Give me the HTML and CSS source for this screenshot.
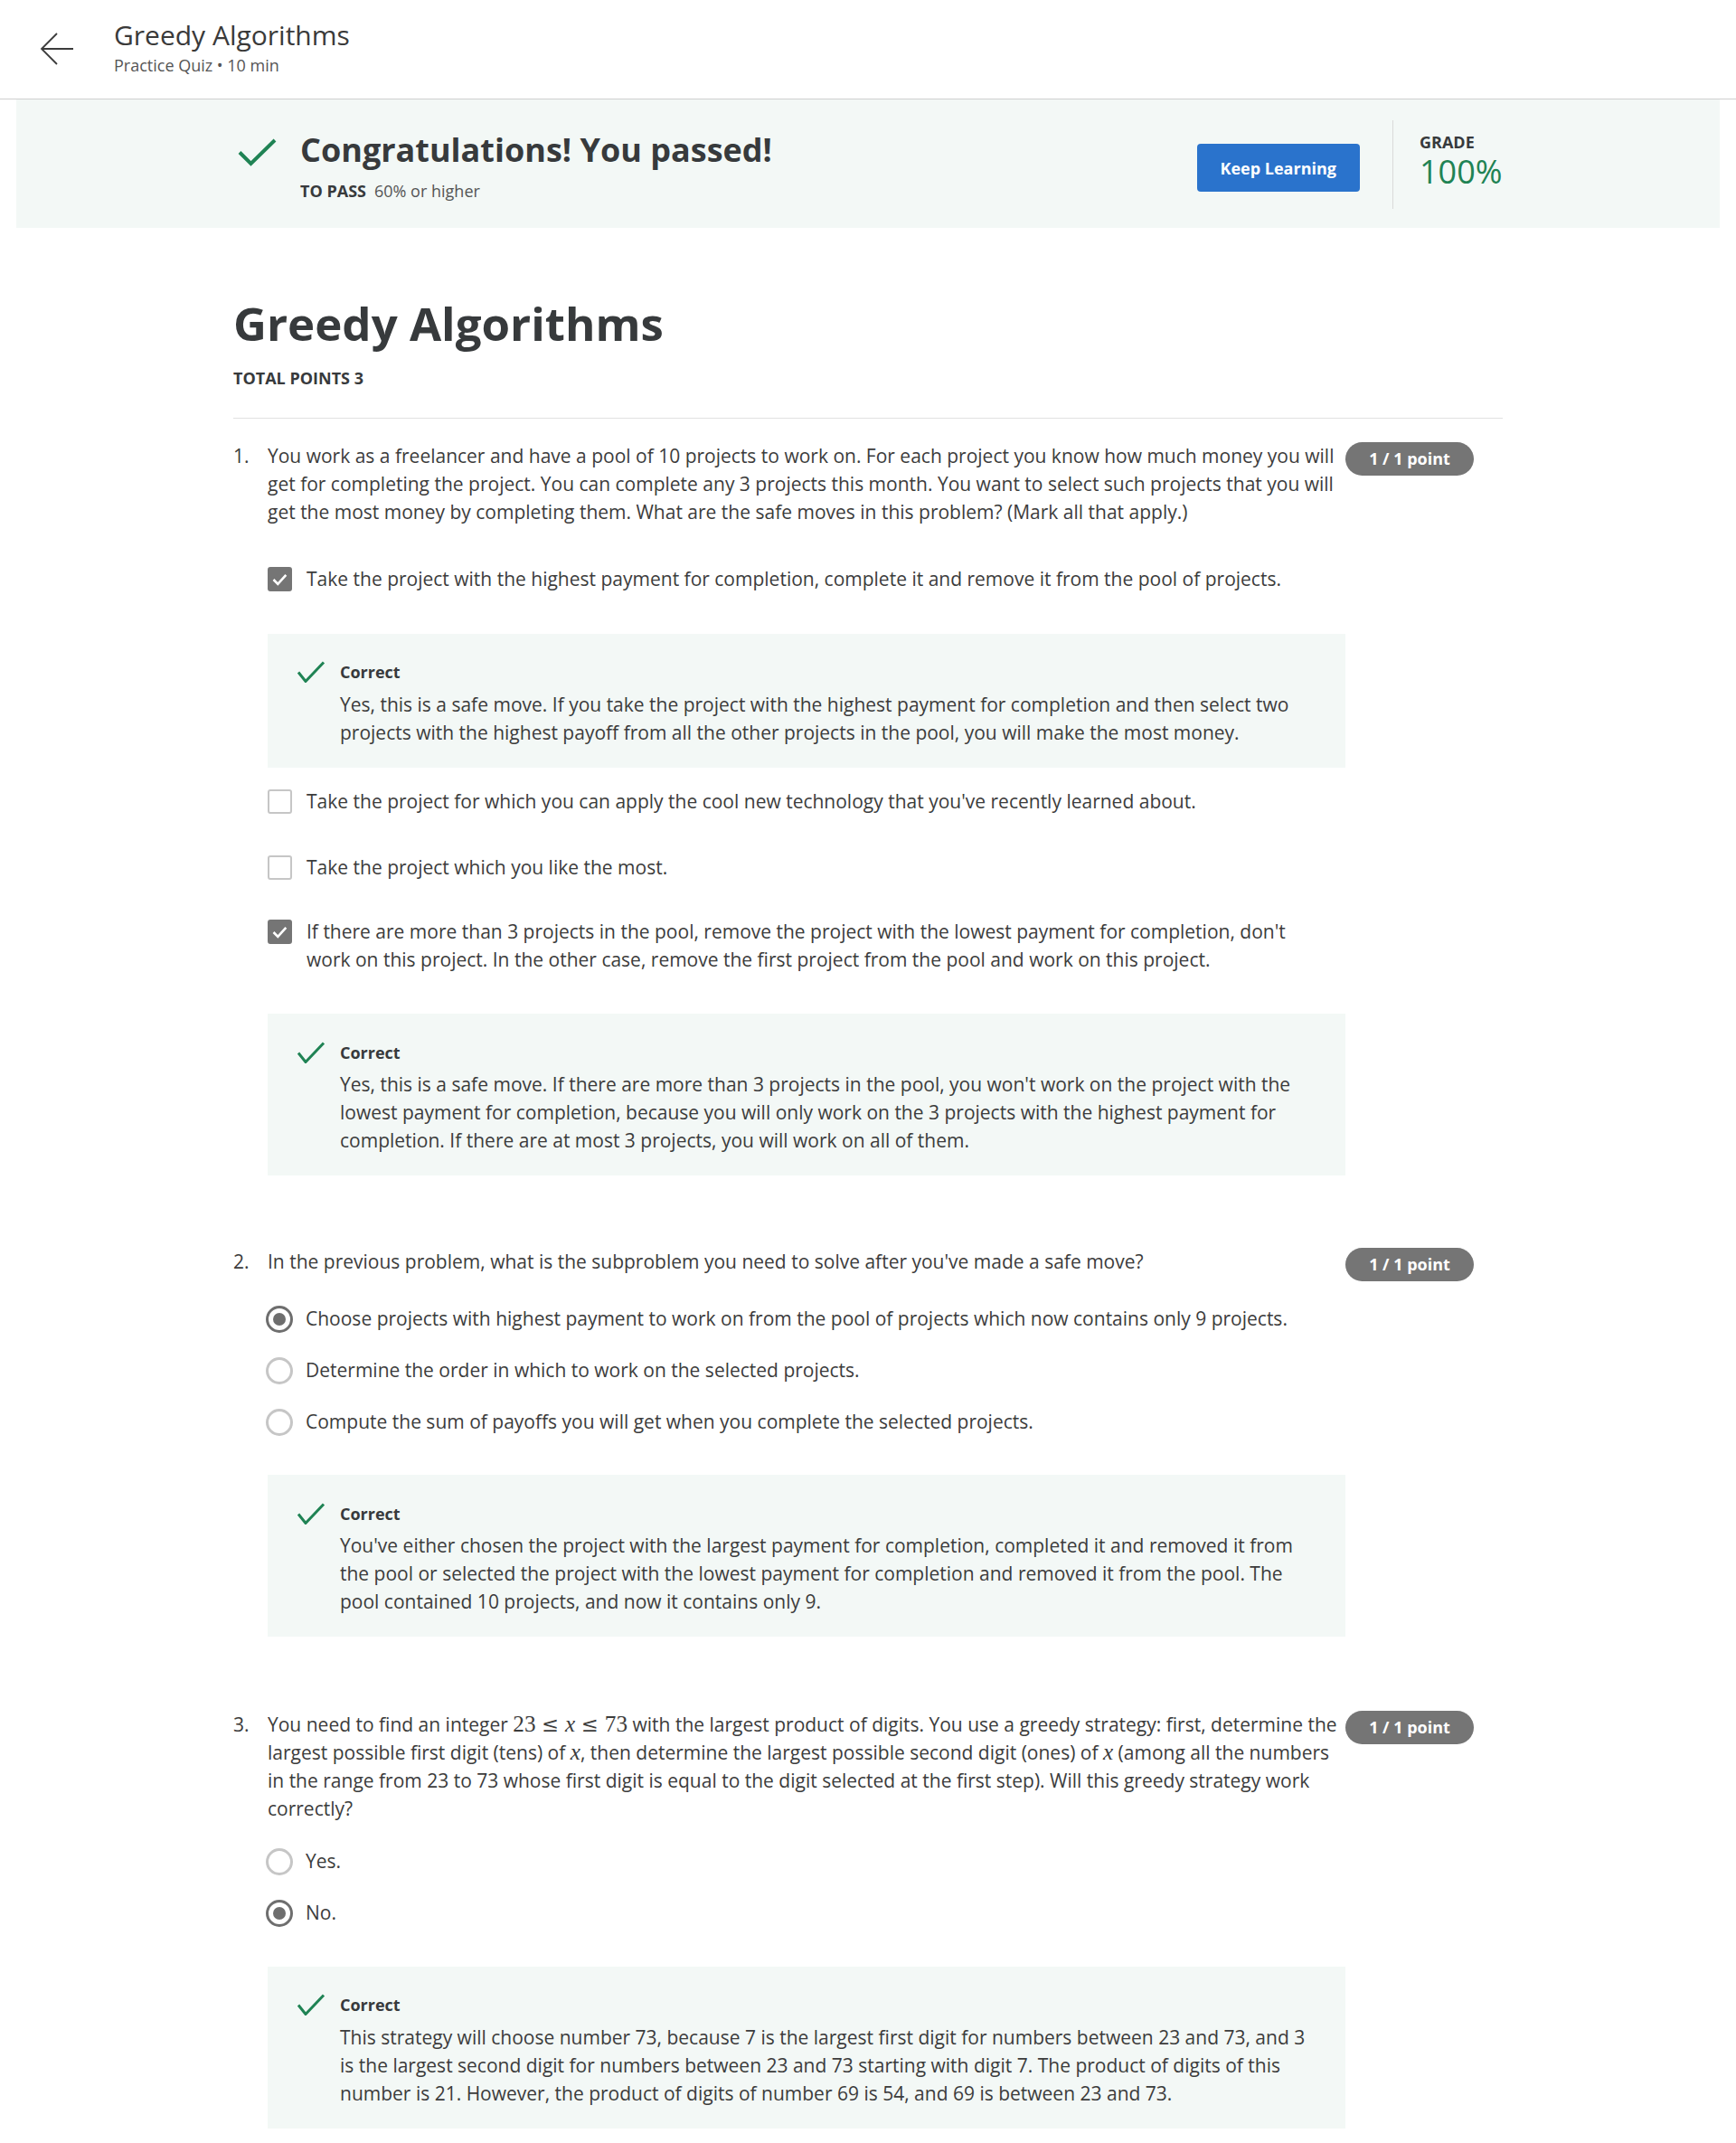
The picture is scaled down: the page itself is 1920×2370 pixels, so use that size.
FILE: index.html
```html
<!DOCTYPE html>
<html lang="en">
<head>
<meta charset="utf-8">
<title>Greedy Algorithms | Practice Quiz</title>
<link rel="stylesheet" href="styles.css">
</head>
<body>
<header class="topbar">
  <a class="back" aria-label="Back">
    <svg viewBox="0 0 38 36" width="38" height="36"><path d="M37 18H2M19 1L2 18l17 17" fill="none" stroke="#3c3c3c" stroke-width="1.8"/></svg>
  </a>
  <div class="item-head">
    <div class="item-title">Greedy Algorithms</div>
    <div class="item-sub">Practice Quiz • 10 min</div>
  </div>
</header>

<section class="banner">
  <div class="banner-inner">
    <div class="pass">
      <svg class="pass-check" viewBox="0 0 43 31" width="43" height="31"><path d="M2 15.5l12.5 12.5L41 2" fill="none" stroke="#1f8354" stroke-width="4"/></svg>
      <div class="pass-text">
        <div class="pass-title">Congratulations! You passed!</div>
        <div class="pass-req"><b>TO PASS</b>60% or higher</div>
      </div>
    </div>
    <div class="result">
      <button class="keep">Keep Learning</button>
      <div class="vdiv"></div>
      <div class="grade">
        <div class="grade-label">GRADE</div>
        <div class="grade-value">100%</div>
      </div>
    </div>
  </div>
</section>

<main class="quiz">
  <h1>Greedy Algorithms</h1>
  <div class="total">TOTAL POINTS 3</div>
  <hr class="rule">

  <div class="question">
    <div class="qnum">1.</div>
    <div class="qbody">
      <div class="qtext">You work as a freelancer and have a pool of 10 projects to work on. For each project you know how much money you will get for completing the project. You can complete any 3 projects this month. You want to select such projects that you will get the most money by completing them. What are the safe moves in this problem? (Mark all that apply.)</div>
      <div class="options checks">
        <div class="opt"><span class="box checked"><svg viewBox="0 0 23 23" width="23" height="23"><path d="M4.5 12l4.8 4.8 9-10" fill="none" stroke="#fff" stroke-width="2.6"/></svg></span><span class="opt-text">Take the project with the highest payment for completion, complete it and remove it from the pool of projects.</span></div>
        <div class="feedback">
          <svg class="fb-icon" viewBox="0 0 32 24" width="32" height="24"><path d="M2 12.5l8 10L30 1.5" fill="none" stroke="#1f8354" stroke-width="3"/></svg>
          <div class="fb-body">
            <div class="fb-label">Correct</div>
            <div class="fb-text">Yes, this is a safe move. If you take the project with the highest payment for completion and then select two projects with the highest payoff from all the other projects in the pool, you will make the most money.</div>
          </div>
        </div>
        <div class="opt"><span class="box"></span><span class="opt-text">Take the project for which you can apply the cool new technology that you've recently learned about.</span></div>
        <div class="opt"><span class="box"></span><span class="opt-text">Take the project which you like the most.</span></div>
        <div class="opt"><span class="box checked"><svg viewBox="0 0 23 23" width="23" height="23"><path d="M4.5 12l4.8 4.8 9-10" fill="none" stroke="#fff" stroke-width="2.6"/></svg></span><span class="opt-text">If there are more than 3 projects in the pool, remove the project with the lowest payment for completion, don't work on this project. In the other case, remove the first project from the pool and work on this project.</span></div>
        <div class="feedback">
          <svg class="fb-icon" viewBox="0 0 32 24" width="32" height="24"><path d="M2 12.5l8 10L30 1.5" fill="none" stroke="#1f8354" stroke-width="3"/></svg>
          <div class="fb-body">
            <div class="fb-label">Correct</div>
            <div class="fb-text">Yes, this is a safe move. If there are more than 3 projects in the pool, you won't work on the project with the lowest payment for completion, because you will only work on the 3 projects with the highest payment for completion. If there are at most 3 projects, you will work on all of them.</div>
          </div>
        </div>
      </div>
    </div>
    <div class="qscore"><span class="badge">1 / 1 point</span></div>
  </div>

  <div class="question">
    <div class="qnum">2.</div>
    <div class="qbody">
      <div class="qtext">In the previous problem, what is the subproblem you need to solve after you've made a safe move?</div>
      <div class="options radios">
        <div class="opt"><span class="radio on"></span><span class="opt-text">Choose projects with highest payment to work on from the pool of projects which now contains only 9 projects.</span></div>
        <div class="opt"><span class="radio"></span><span class="opt-text">Determine the order in which to work on the selected projects.</span></div>
        <div class="opt"><span class="radio"></span><span class="opt-text">Compute the sum of payoffs you will get when you complete the selected projects.</span></div>
        <div class="feedback">
          <svg class="fb-icon" viewBox="0 0 32 24" width="32" height="24"><path d="M2 12.5l8 10L30 1.5" fill="none" stroke="#1f8354" stroke-width="3"/></svg>
          <div class="fb-body">
            <div class="fb-label">Correct</div>
            <div class="fb-text">You've either chosen the project with the largest payment for completion, completed it and removed it from the pool or selected the project with the lowest payment for completion and removed it from the pool. The pool contained 10 projects, and now it contains only 9.</div>
          </div>
        </div>
      </div>
    </div>
    <div class="qscore"><span class="badge">1 / 1 point</span></div>
  </div>

  <div class="question">
    <div class="qnum">3.</div>
    <div class="qbody">
      <div class="qtext">You need to find an integer <span class="math">23<span class="rel">≤</span><i>x</i><span class="rel">≤</span>73</span> with the largest product of digits. You use a greedy strategy: first, determine the largest possible first digit (tens) of <span class="math"><i>x</i></span>, then determine the largest possible second digit (ones) of <span class="math"><i>x</i></span> (among all the numbers in the range from 23 to 73 whose first digit is equal to the digit selected at the first step). Will this greedy strategy work correctly?</div>
      <div class="options radios tight">
        <div class="opt"><span class="radio"></span><span class="opt-text">Yes.</span></div>
        <div class="opt"><span class="radio on"></span><span class="opt-text">No.</span></div>
        <div class="feedback">
          <svg class="fb-icon" viewBox="0 0 32 24" width="32" height="24"><path d="M2 12.5l8 10L30 1.5" fill="none" stroke="#1f8354" stroke-width="3"/></svg>
          <div class="fb-body">
            <div class="fb-label">Correct</div>
            <div class="fb-text">This strategy will choose number 73, because 7 is the largest first digit for numbers between 23 and 73, and 3 is the largest second digit for numbers between 23 and 73 starting with digit 7. The product of digits of this number is 21. However, the product of digits of number 69 is 54, and 69 is between 23 and 73.</div>
          </div>
        </div>
      </div>
    </div>
    <div class="qscore"><span class="badge">1 / 1 point</span></div>
  </div>
</main>
</body>
</html>
```

FILE: styles.css
```css
* { box-sizing: border-box; }

body {
  margin: 0;
  font-family: "Open Sans", "Liberation Sans", sans-serif;
  color: #373a3c;
  background: #fff;
}

/* top bar */
.topbar {
  height: 110px;
  border-bottom: 1px solid #cfcfcf;
  display: flex;
  align-items: flex-start;
}
.back { display: block; margin: 36px 0 0 44px; width: 38px; height: 36px; }
.back svg { display: block; }
.item-head { margin: 21px 0 0 44px; }
.item-title { font-size: 30px; line-height: 36px; color: #3a3a3a; }
.item-sub { font-size: 18px; line-height: 24px; margin-top: 3px; color: #555; }

/* pass banner */
.banner {
  margin: 0 18px;
  height: 142px;
  background: #f3f8f6;
}
.banner-inner {
  width: 1404px;
  height: 100%;
  margin: 0 auto;
  display: flex;
  justify-content: space-between;
  align-items: flex-start;
}
.pass { display: flex; align-items: flex-start; }
.pass-check { display: block; margin: 43px 0 0 5px; }
.pass-text { margin: 34px 0 0 26px; }
.pass-title { font-size: 36px; line-height: 44px; font-weight: 700; color: #373a3c; }
.pass-req { font-size: 18px; line-height: 27px; margin-top: 9.5px; color: #555; }
.pass-req b { color: #373a3c; margin-right: 9px; }

.result { display: flex; align-items: flex-start; }
.keep {
  margin-top: 49px;
  height: 53px;
  padding: 0 26px;
  background: #2a73cc;
  color: #fff;
  border: 0;
  border-radius: 4px;
  font-family: "Open Sans", sans-serif;
  font-size: 18px;
  font-weight: 700;
}
.vdiv { margin: 23px 29px 0 36px; width: 1px; height: 98px; background: #dadada; }
.grade { margin-top: 33.5px; width: 92px; }
.grade-label { font-size: 18px; line-height: 27px; font-weight: 700; color: #373a3c; }
.grade-value { font-size: 36px; line-height: 44px; margin-top: -3px; color: #1f8354; }

/* quiz */
.quiz { width: 1404px; margin: 0 auto; padding: 75px 0 40px; }
.quiz h1 { margin: 0; font-size: 51px; line-height: 61px; font-weight: 700; color: #373a3c; }
.total { margin-top: 16.5px; font-size: 18px; line-height: 27px; font-weight: 700; }
.rule { margin: 30px 0 0; border: 0; border-top: 1px solid #e1e1e1; height: 0; }

.question {
  display: grid;
  grid-template-columns: 38px 1192px 142px;
  margin-top: 26.5px;
  font-size: 21px;
  line-height: 31px;
  color: #3c3c3c;
}
.question + .question { margin-top: 80px; }
.question:last-child { margin-top: 81.5px; }
.qtext { padding-right: 4px; }

.badge {
  display: block;
  width: 142px;
  height: 37px;
  border-radius: 19px;
  background: #757575;
  color: #fff;
  font-size: 18px;
  font-weight: 700;
  line-height: 37px;
  text-align: center;
}

.options.checks { margin-top: 23px; }
.options.radios { margin-top: 19px; }
.options.radios.tight { margin-top: 14.5px; }
.opt { display: flex; align-items: flex-start; padding: 20px 40px 20px 0; }
.checks .opt:nth-child(4) { padding-top: 21.5px; }
.radios .opt { padding: 13px 40px 13px 0; }

.box {
  flex: none;
  width: 27px;
  height: 27px;
  margin: 2px 16px 0 0;
  border: 2px solid #c6c6c6;
  border-radius: 3px;
}
.box.checked { background: #757575; border-color: #757575; }
.box svg { display: block; }

.radio {
  flex: none;
  width: 30px;
  height: 30px;
  margin: 0.5px 14px 0 -2px;
  border: 3px solid #c6c6c6;
  border-radius: 50%;
}
.radio.on { border-color: #6e6e6e; }
.radio.on::after {
  content: "";
  display: block;
  width: 14px;
  height: 14px;
  margin: 5px;
  border-radius: 50%;
  background: #6e6e6e;
}

.feedback {
  display: flex;
  align-items: flex-start;
  padding: 29.5px 40px 23px 32px;
  background: #f3f8f6;
  margin: 24.5px 0 2.5px;
}
.radios .feedback { margin-top: 30px; }
.tight .feedback { margin-top: 30.5px; }
.options .feedback:last-child { margin-bottom: 0; }
.fb-icon { flex: none; display: block; margin: 1px 16px 0 0; }
.fb-label { font-size: 18px; line-height: 27px; font-weight: 700; color: #373a3c; }
.fb-text { margin-top: 6.5px; }

.math {
  font-family: "Liberation Serif", "DejaVu Serif", serif;
  font-size: 1.2em;
  line-height: 1;
  white-space: nowrap;
}
.math .rel { padding: 0 0.3em; font-family: "DejaVu Serif", serif; font-size: 0.9em; }
.math i { font-style: italic; }
```
